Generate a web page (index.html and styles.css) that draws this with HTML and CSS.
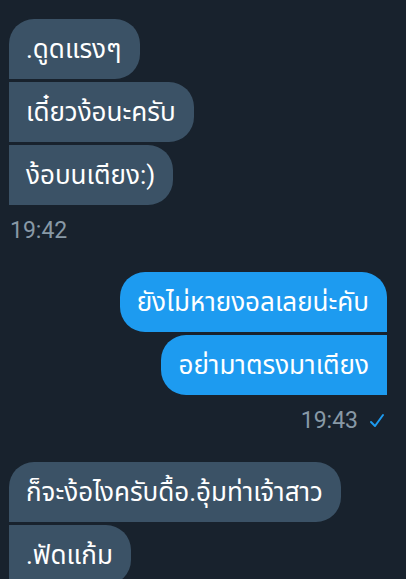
FILE: index.html
```html
<!DOCTYPE html>
<html lang="th">
<head>
  <meta charset="UTF-8" />
  <meta name="viewport" content="width=device-width, initial-scale=1.0"/>
  <title>Messages</title>
  <link rel="stylesheet" href="styles.css">
</head>
<body>
  <div class="chat">
    <div class="group received">
      <div class="bubble first">.ดูดแรงๆ</div>
      <div class="bubble">เดี๋ยวง้อนะครับ</div>
      <div class="bubble last">ง้อบนเตียง:)</div>
      <div class="meta">19:42</div>
    </div>

    <div class="group sent">
      <div class="bubble first">ยังไม่หายงอลเลยน่ะคับ</div>
      <div class="bubble last">อย่ามาตรงมาเตียง</div>
      <div class="meta">19:43
        <svg class="check" viewBox="0 0 16 16" width="16" height="16">
          <path d="M2 9 L6 13 L14 2" fill="none" stroke="#1d9bf0" stroke-width="2" stroke-linecap="round" stroke-linejoin="round"/>
        </svg>
      </div>
    </div>

    <div class="group received">
      <div class="bubble first">ก็จะง้อไงครับดื้อ.อุ้มท่าเจ้าสาว</div>
      <div class="bubble">.ฟัดแก้ม</div>
    </div>
  </div>
</body>
</html>
```

FILE: styles.css
```css
body {
  margin: 0;
  background-color: #18222d;
  font-family: Roboto, "Noto Sans", "Noto Sans Thai", sans-serif;
  color: white;
  overflow: hidden;
}
.chat {
  display: flex;
  flex-direction: column;
  padding: 19px 19px 0 9px;
  gap: 26px;
}
.group {
  display: flex;
  flex-direction: column;
  gap: 3px;
}
.received {
  align-items: flex-start;
}
.sent {
  align-items: flex-end;
}
.bubble {
  font-size: 26px;
  line-height: 30px;
  padding: 15px 18px 15px 17px;
  border-radius: 25px;
}
.received .bubble {
  background-color: #3b5266;
  border-top-left-radius: 0;
  border-bottom-left-radius: 0;
}
.received .bubble.first {
  border-top-left-radius: 25px;
}
.sent .bubble {
  background-color: #1d9bf0;
  border-top-right-radius: 0;
  border-bottom-right-radius: 0;
}
.sent .bubble.first {
  border-top-right-radius: 25px;
}
.meta {
  color: #8899a6;
  font-size: 23px;
  line-height: 30px;
  margin-top: 8px;
  display: flex;
  align-items: center;
  gap: 11px;
}
.received .meta {
  margin-left: 1px;
}
.sent .meta {
  margin-right: 2px;
}
.check {
  display: block;
}
```
